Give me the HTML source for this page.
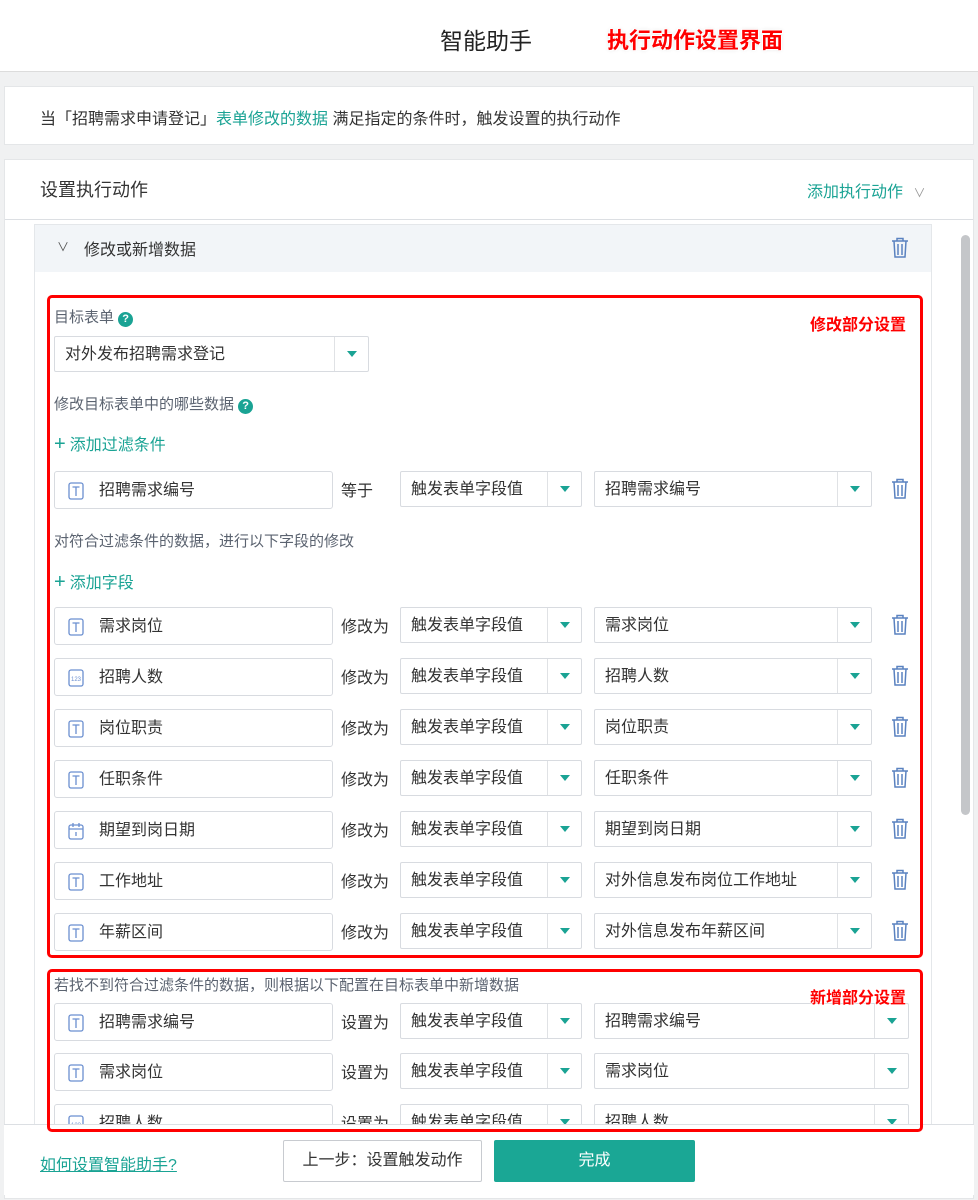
<!DOCTYPE html>
<html><head><meta charset="utf-8">
<style>
*{box-sizing:border-box;margin:0;padding:0}
body{width:978px;height:1200px;position:relative;overflow:hidden;background:#f0f1f2;font-family:"Liberation Sans","Noto Sans CJK SC",sans-serif;color:#333}
.a{position:absolute}
.hdr{left:0;top:0;width:978px;height:72px;background:#fff;border-bottom:1px solid #dcdcdc}
.card{background:#fff;border:1px solid #e4e6e8}
.lbl{font-size:15px;color:#5b6370;white-space:nowrap}
.teal{color:#1aa394}
.inp{height:38px;background:#fff;border:1px solid #d8dbe0;border-radius:3px;font-size:16px;line-height:38px;color:#333}
.sel{height:36px;background:#fff;border:1px solid #d8dbe0;border-radius:2px;font-size:16px;line-height:36px;padding-left:10px;color:#333}
.sel .d{position:absolute;right:0;top:0;width:34px;height:34px;border-left:1px solid #e0e2e5}
.sel .d:after{content:"";position:absolute;left:12px;top:14px;border-left:5px solid transparent;border-right:5px solid transparent;border-top:6px solid #1aa394}
.ico{position:absolute;left:13px;top:10px}
.op{font-size:16px;color:#333}
.red{color:#f00;font-weight:bold;text-shadow:0 0 2px #fff,0 0 2px #fff}
.box{border:3px solid #f00;border-radius:5px;z-index:5}
</style></head><body>
<div class="a hdr"></div>
<div class="a" style="left:440px;top:22px;font-size:23px;color:#222">智能助手</div>
<div class="a red" style="left:607px;top:23px;font-size:22px;text-shadow:1px 1px 0 #fff,-1px -1px 0 #fff,0 0 4px #ddd">执行动作设置界面</div>

<div class="a card" style="left:4px;top:86px;width:970px;height:59px"></div>
<div class="a" style="left:40px;top:105px;font-size:16px;color:#333;white-space:nowrap">当「招聘需求申请登记」<span class="teal">表单修改的数据</span> 满足指定的条件时，触发设置的执行动作</div>

<div class="a card" style="left:4px;top:159px;width:970px;height:1040px"></div>
<div class="a" style="left:40px;top:176px;font-size:18px;color:#333">设置执行动作</div>
<div class="a teal" style="left:807px;top:178px;font-size:16px">添加执行动作 <span style="color:#999;font-size:12px;margin-left:6px">∨</span></div>
<div class="a" style="left:5px;top:219px;width:968px;height:1px;background:#dcdfe3"></div>
<div class="a" style="left:34px;top:224px;width:898px;height:910px;background:#fff;border:1px solid #e4e7ea"></div>
<div class="a" style="left:35px;top:225px;width:896px;height:47px;background:#f2f5f8"></div>
<div class="a" style="left:57px;top:238px;font-size:12px;color:#555">∨</div>
<div class="a" style="left:84px;top:236px;font-size:16px;color:#333">修改或新增数据</div>
<svg class="a" style="left:891px;top:237px" width="18" height="22" viewBox="0 0 18 22"><g fill="none" stroke="#5a82c0" stroke-width="1.5"><path d="M1 4h16M6 4V1.5h6V4M3 4l1 16h10l1-16M7 7v11M11 7v11"/></g></svg>
<div class="a" style="left:961px;top:235px;width:9px;height:580px;background:#c4c6c9;border-radius:5px"></div>

<div class="a box" style="left:47px;top:295px;width:876px;height:663px"></div>
<div class="a red" style="left:810px;top:311px;font-size:16px;z-index:6">修改部分设置</div>
<div class="a lbl" style="left:54px;top:306px">目标表单 <span style="display:inline-block;width:15px;height:15px;border-radius:50%;background:#1aa394;color:#fff;font-size:11px;line-height:15px;text-align:center;font-weight:bold">?</span></div>
<div class="a sel" style="left:54px;top:336px;width:315px;height:36px">对外发布招聘需求登记<div class="d"></div></div>
<div class="a lbl" style="left:54px;top:393px">修改目标表单中的哪些数据 <span style="display:inline-block;width:15px;height:15px;border-radius:50%;background:#1aa394;color:#fff;font-size:11px;line-height:15px;text-align:center;font-weight:bold">?</span></div>
<div class="a teal" style="left:54px;top:431px;font-size:16px"><span style="font-size:20px;margin-right:4px">+</span>添加过滤条件</div>
<div class="a lbl" style="left:54px;top:530px">对符合过滤条件的数据，进行以下字段的修改</div>
<div class="a teal" style="left:54px;top:569px;font-size:16px"><span style="font-size:20px;margin-right:4px">+</span>添加字段</div>

<div class="a box" style="left:47px;top:969px;width:876px;height:163px"></div>
<div class="a red" style="left:810px;top:984px;font-size:16px;z-index:6">新增部分设置</div>
<div class="a lbl" style="left:54px;top:974px">若找不到符合过滤条件的数据，则根据以下配置在目标表单中新增数据</div>

<div id="rows"></div>

<div class="a" style="left:4px;top:1124px;width:970px;height:71px;background:#fff;border-top:1px solid #dcdfe3;z-index:4"></div>
<div class="a teal" style="left:40px;top:1151px;font-size:16px;text-decoration:underline;z-index:4">如何设置智能助手?</div>
<div class="a" style="left:283px;top:1140px;width:199px;height:42px;border:1px solid #c8cbd0;border-radius:2px;background:#fff;font-size:16px;line-height:40px;text-align:center;z-index:4">上一步：设置触发动作</div>
<div class="a" style="left:494px;top:1140px;width:201px;height:42px;background:#1aa795;border-radius:2px;color:#fff;font-size:16px;line-height:42px;text-align:center;z-index:4">完成</div>

<script>
var T='<svg class="ico" width="16" height="18" viewBox="0 0 16 18"><rect x="1" y="1" width="14" height="16" rx="2" fill="none" stroke="#6b8fd0" stroke-width="1.3"/><path d="M4.5 5h7M8 5v9" stroke="#6b8fd0" stroke-width="1.3"/></svg>';
var N='<svg class="ico" width="16" height="18" viewBox="0 0 16 18"><rect x="1" y="1" width="14" height="16" rx="2" fill="none" stroke="#6b8fd0" stroke-width="1.3"/><text x="8" y="12" font-size="6" text-anchor="middle" fill="#6b8fd0" font-family="Liberation Sans">123</text></svg>';
var D='<svg class="ico" width="16" height="18" viewBox="0 0 16 18"><rect x="1" y="3" width="14" height="14" rx="2" fill="none" stroke="#6b8fd0" stroke-width="1.3"/><path d="M1 7h14M5 1v4M11 1v4M8 10v4" stroke="#6b8fd0" stroke-width="1.3"/></svg>';
var tr='<svg class="a" width="18" height="22" viewBox="0 0 18 22" style="left:891px;top:TOPpx"><g fill="none" stroke="#5a82c0" stroke-width="1.5"><path d="M1 4h16M6 4V1.5h6V4M3 4l1 16h10l1-16M7 7v11M11 7v11"/></g></svg>';
var rows=[[471,T,'招聘需求编号','等于','招聘需求编号',1,872],
[607,T,'需求岗位','修改为','需求岗位',1,872],
[658,N,'招聘人数','修改为','招聘人数',1,872],
[709,T,'岗位职责','修改为','岗位职责',1,872],
[760,T,'任职条件','修改为','任职条件',1,872],
[811,D,'期望到岗日期','修改为','期望到岗日期',1,872],
[862,T,'工作地址','修改为','对外信息发布岗位工作地址',1,872],
[913,T,'年薪区间','修改为','对外信息发布年薪区间',1,872],
[1003,T,'招聘需求编号','设置为','招聘需求编号',0,909],
[1053,T,'需求岗位','设置为','需求岗位',0,909],
[1104,N,'招聘人数','设置为','招聘人数',0,909]];
var h='';
rows.forEach(function(r){var y=r[0];
h+='<div class="a inp" style="left:54px;top:'+y+'px;width:279px;padding-left:44px">'+r[1]+r[2]+'</div>';
h+='<div class="a op" style="left:341px;top:'+(y+6)+'px">'+r[3]+'</div>';
h+='<div class="a sel" style="left:400px;top:'+y+'px;width:182px">触发表单字段值<div class="d"></div></div>';
h+='<div class="a sel" style="left:594px;top:'+y+'px;width:'+(r[6]-594)+'px">'+r[4]+'<div class="d"></div></div>';
if(r[5])h+=tr.replace('TOP',y+7);});
document.getElementById('rows').innerHTML=h;
</script>
</body></html>
